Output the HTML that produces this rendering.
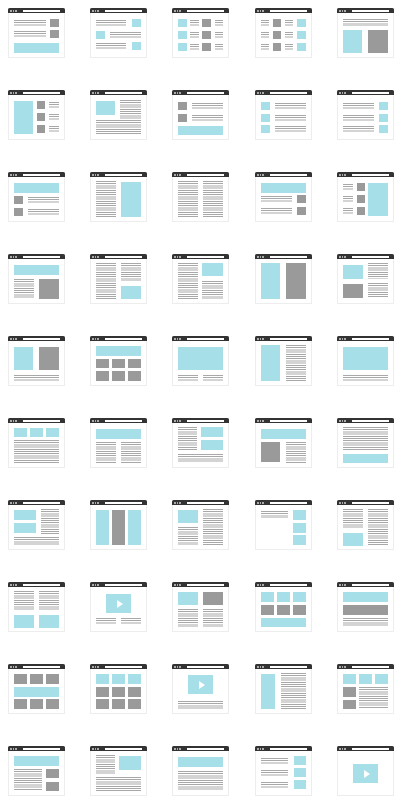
<!DOCTYPE html>
<html><head><meta charset="utf-8"><style>
html,body{margin:0;padding:0;background:#fff;width:406px;height:806px;overflow:hidden;position:relative;font-family:"Liberation Sans",sans-serif}
.i{position:absolute;width:57px;height:50px;box-sizing:border-box;border:1px solid #ededed;border-top:none;background:#fff}
.h{position:absolute;left:-1px;top:0;width:57px;height:5px;background:#333;border-radius:2px 2px 0 0}
.u{position:absolute;left:15px;top:1.5px;width:37px;height:2px;background:#fff}
.d{position:absolute;top:2px;width:1.5px;height:1.5px;background:#aaa}
.c{position:absolute;left:5px;top:9px;width:45px;height:36px}
.c div{position:absolute}
.B{background:#a6dfe8}.G{background:#9a9a9a}
.L{background:repeating-linear-gradient(#a8a8a8 0 1px,transparent 1px 2.2px)}
.V{background:#a6dfe8}
.V:after{content:"";position:absolute;left:50%;top:50%;margin:-4px 0 0 -2px;border-left:6px solid #fff;border-top:4px solid transparent;border-bottom:4px solid transparent}
</style></head><body>
<script>
var S=[
"L0,3,32,6;G36,2,9,8;L0,14,32,6;G36,13,9,8;B0,26,45,10",
"L0,3,30,6;B36,2,9,8;B0,14,9,8;L14,15,31,6;L0,26,30,6;B36,25,9,8",
"B0,2,9,8;L12,3,9,6;G24,2,9,8;L37,3,8,6;B0,14,9,8;L12,15,9,6;G24,14,9,8;L37,15,8,6;B0,26,9,8;L12,27,9,6;G24,26,9,8;L37,27,8,6",
"L0,3,8,6;G12,2,8,8;L24,3,8,6;B36,2,9,8;L0,15,8,6;G12,14,8,8;L24,15,8,6;B36,14,9,8;L0,27,8,6;G12,26,8,8;L24,27,8,6;B36,26,9,8",
"L0,2,45,7;B0,13,19,23;G25,13,20,23",
"B0,2,19,33;G23,2,8,8;L35,3,10,6;G23,14,8,8;L35,15,10,6;G23,26,8,8;L35,27,10,6",
"B0,2,19,14;L24,1,21,19;L0,21,45,15",
"G0,3,9,8;L14,4,31,6;G0,15,9,8;L14,16,31,6;B0,27,45,9",
"B0,3,9,8;L14,4,31,6;B0,15,9,8;L14,16,31,6;B0,26,9,8;L14,27,31,6",
"L0,4,31,6;B36,3,9,8;L0,16,31,6;B36,15,9,8;L0,27,31,6;B36,26,9,8",
"B0,2,45,10;G0,15,9,8;L14,16,31,6;G0,27,9,8;L14,28,31,6",
"L0,0,20,36;B25,1,20,35",
"L0,0,20,36;L25,0,20,36",
"B0,2,45,10;L0,15,31,6;G36,14,9,8;L0,27,31,6;G36,26,9,8",
"L0,3,10,6;G14,2,8,8;L0,15,10,6;G14,14,8,8;L0,27,10,6;G14,26,8,8;B25,2,20,33",
"B0,2,45,10;L0,16,20,20;G25,16,20,20",
"L0,0,20,36;L25,0,20,18;B25,23,20,13",
"L0,0,20,36;B24,0,21,13;L24,18,21,18",
"B0,0,19,36;G25,0,20,36",
"B0,2,20,14;L25,0,20,16;G0,21,20,14;L25,20,20,15",
"B0,2,19,23;G25,2,20,23;L0,30,45,6",
"B0,1,45,10;G0,14,13,9;G16,14,13,9;G32,14,13,9;G0,26,13,10;G16,26,13,10;G32,26,13,10",
"B0,2,45,23;L0,30,20,6;L25,30,20,6",
"B0,0,19,36;L25,0,20,36",
"B0,2,45,23;L0,30,45,6",
"B0,1,13,9;B16,1,13,9;B32,1,13,9;L0,13,45,23",
"B0,2,45,10;L0,15,20,21;L25,15,20,21",
"L0,0,19,24;B23,0,22,10;B23,13,22,10;L0,27,45,9",
"B0,2,45,10;G0,15,19,20;L25,15,20,21",
"L0,0,45,24;B0,27,45,9",
"B0,1,22,10;B0,14,22,10;L27,0,18,26;L0,28,45,8",
"B0,1,13,35;G16,1,13,35;B32,1,13,35",
"B0,1,20,13;L25,0,20,36;L0,18,20,18",
"L0,2,27,7;B32,1,13,10;B32,14,13,10;B32,26,13,10",
"L0,0,20,20;L25,0,20,36;B0,24,20,13",
"L0,0,20,20;L25,0,20,20;B0,24,20,13;B25,24,20,13",
"V10,3,25,19;L0,27,20,6;L25,27,20,6",
"B0,1,20,13;G25,1,20,13;L0,18,20,18;L25,18,20,18",
"B0,1,13,10;B16,1,13,10;B32,1,13,10;G0,14,13,10;G16,14,13,10;G32,14,13,10;B0,27,45,9",
"B0,1,45,10;G0,14,45,10;L0,27,45,9",
"G0,1,13,10;G16,1,13,10;G32,1,13,10;B0,14,45,10;G0,26,13,10;G16,26,13,10;G32,26,13,10",
"B0,1,13,10;B16,1,13,10;B32,1,13,10;G0,14,13,10;G16,14,13,10;G32,14,13,10;G0,26,13,10;G16,26,13,10;G32,26,13,10",
"V10,2,25,19;L0,28,45,8",
"B0,1,14,35;L20,0,25,36",
"B0,1,13,10;B16,1,13,10;B32,1,13,10;G0,14,13,10;G0,27,13,9;L16,14,29,22",
"B0,1,45,10;L0,14,28,22;G32,14,13,9;G32,27,13,9",
"L0,0,19,20;B23,1,22,14;L0,22,45,14",
"B0,2,45,10;L0,16,45,20",
"L0,3,27,6;B33,1,12,9;L0,15,27,6;B33,13,12,9;L0,27,27,6;B33,25,12,9",
"V10,9,25,19"
];
var X=[8,90,172,255,337],h="";
for(var k=0;k<50;k++){
 var x=X[k%5],y=8+82*Math.floor(k/5);
 h+='<div class="i" style="left:'+x+'px;top:'+y+'px"><div class="h"><div class="d" style="left:2px"></div><div class="d" style="left:4.5px"></div><div class="d" style="left:7px"></div><div class="u"></div></div><div class="c">';
 S[k].split(";").forEach(function(e){var t=e[0],p=e.slice(1).split(",");
  h+='<div class="'+t+'" style="left:'+p[0]+'px;top:'+p[1]+'px;width:'+p[2]+'px;height:'+p[3]+'px"></div>';});
 h+='</div></div>';
}
document.write(h);
</script>
</body></html>
